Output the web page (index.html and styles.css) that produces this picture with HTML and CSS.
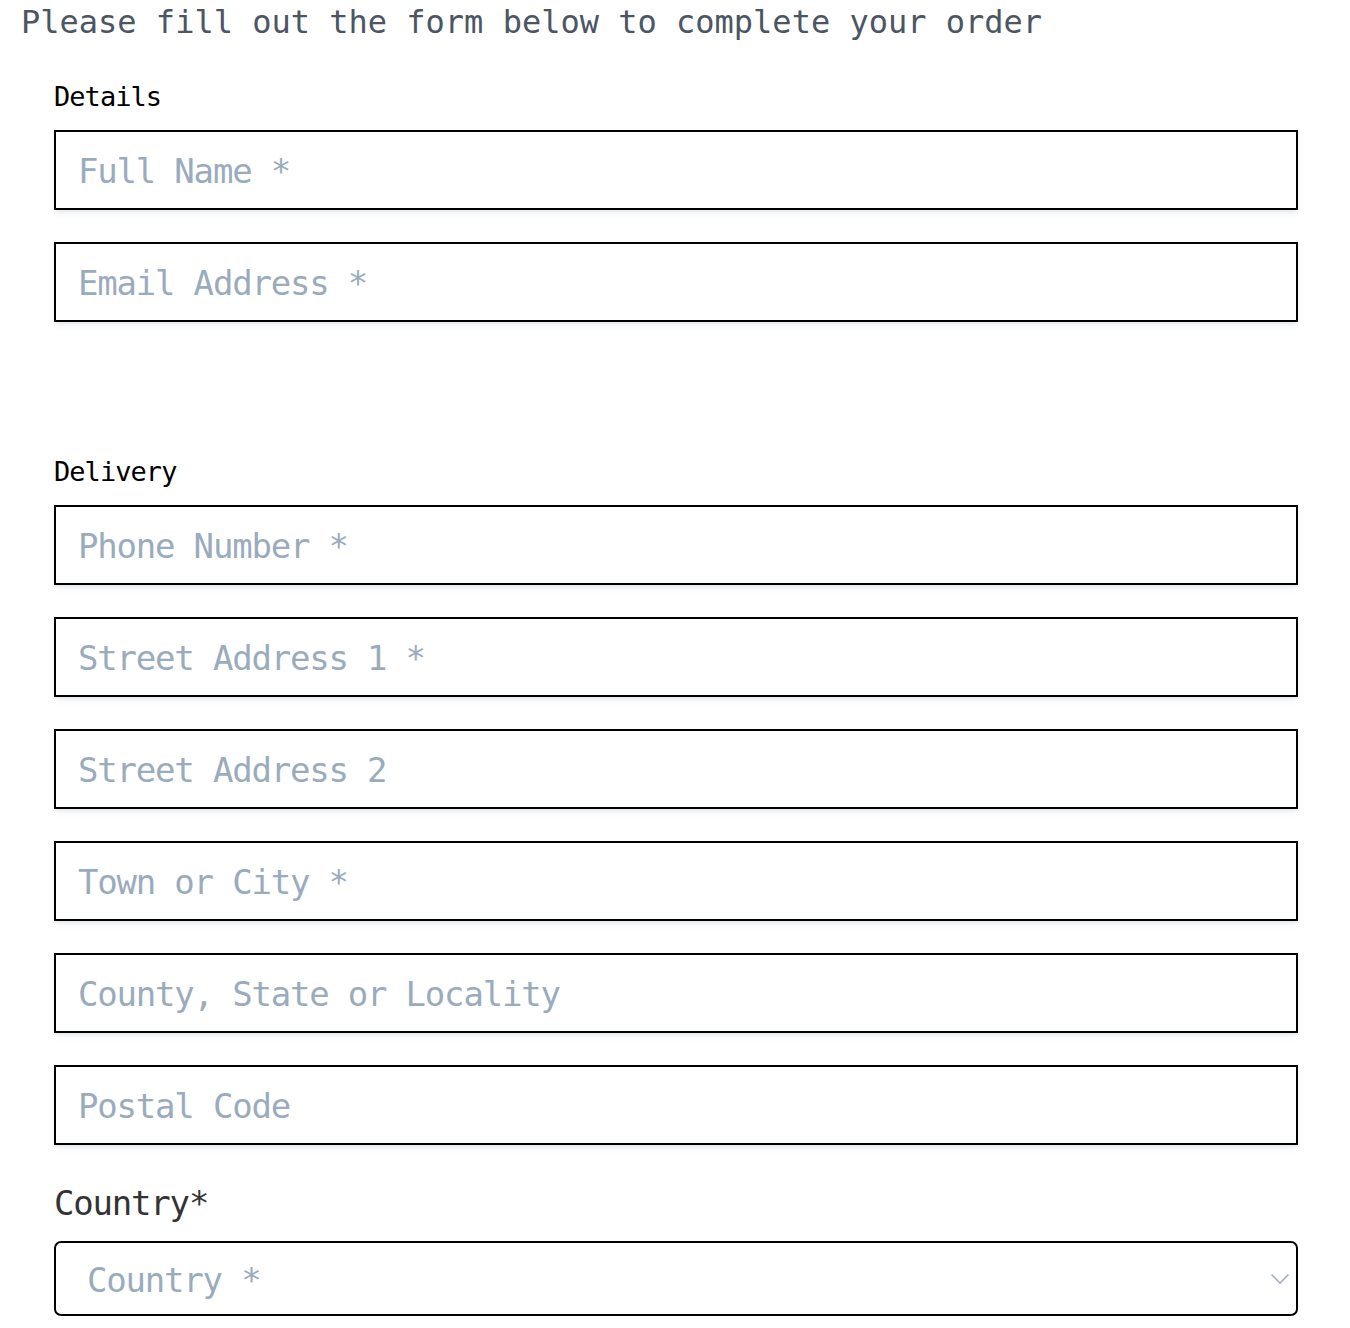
FILE: index.html
```html
<!DOCTYPE html>
<html lang="en">
<head>
<meta charset="utf-8">
<title>Order form</title>
<link rel="stylesheet" href="styles.css">
</head>
<body>
<h1 class="intro">Please fill out the form below to complete your order</h1>
<form class="order-form">
  <section class="group group-details">
    <h2 class="group-title">Details</h2>
    <input class="field" type="text" placeholder="Full Name *">
    <input class="field" type="email" placeholder="Email Address *">
  </section>
  <section class="group group-delivery">
    <h2 class="group-title">Delivery</h2>
    <input class="field" type="tel" placeholder="Phone Number *">
    <input class="field" type="text" placeholder="Street Address 1 *">
    <input class="field" type="text" placeholder="Street Address 2">
    <input class="field" type="text" placeholder="Town or City *">
    <input class="field" type="text" placeholder="County, State or Locality">
    <input class="field" type="text" placeholder="Postal Code">
    <label class="country-label" for="country">Country*</label>
    <div class="select-wrap">
      <select id="country" class="select">
        <option value="" selected disabled>Country *</option>
        <option>United Kingdom</option>
        <option>United States</option>
      </select>
      <svg class="chevron" width="20" height="12" viewBox="0 0 20 12" aria-hidden="true">
        <path d="M1.5 1.5 L10 10 L18.5 1.5" fill="none" stroke="#a3b1c2" stroke-width="1.6"/>
      </svg>
    </div>
  </section>
</form>
</body>
</html>
```
FILE: styles.css
```css
html, body {
  margin: 0;
  padding: 0;
  background: #ffffff;
}

body {
  font-family: "DejaVu Sans Mono", "Liberation Mono", monospace;
  width: 1350px;
}

.intro {
  margin: 2px 0 0 21px;
  font-size: 32px;
  line-height: 40px;
  font-weight: normal;
  color: #4b5563;
  white-space: nowrap;
}

.order-form {
  margin: 0 52px 0 54px;
  display: flex;
  flex-direction: column;
}

.group {
  display: flex;
  flex-direction: column;
  gap: 32px;
}

.group-details {
  margin-top: 39px;
}

.group-delivery {
  margin-top: 134px;
}

.group-title {
  margin: 0 0 -15px 0;
  font-size: 27px;
  letter-spacing: -0.95px;
  line-height: 32px;
  font-weight: normal;
  color: #000000;
}

.field {
  display: block;
  box-sizing: border-box;
  width: 100%;
  height: 80px;
  margin: 0;
  padding: 2px 22px 0;
  border: 2.5px solid #000000;
  border-radius: 0;
  background: #ffffff;
  font-family: inherit;
  font-size: 34px;
  letter-spacing: -1.2px;
  color: #111827;
  box-shadow: 0 4px 6px -1px rgba(100, 116, 139, 0.12), 0 2px 4px -1px rgba(100, 116, 139, 0.08);
  outline: none;
}

.field::placeholder {
  color: #9aabbd;
  opacity: 1;
}

.country-label {
  margin-top: 6px;
  margin-bottom: -14px;
  font-size: 34px;
  letter-spacing: -1.2px;
  line-height: 40px;
  color: #333333;
}

.select-wrap {
  position: relative;
  margin-bottom: 12px;
}

.select {
  display: block;
  box-sizing: border-box;
  width: 100%;
  height: 75px;
  margin: 0;
  padding: 2px 60px 0 31px;
  border: 2px solid #000000;
  border-radius: 7px;
  background: #ffffff;
  font-family: inherit;
  font-size: 34px;
  letter-spacing: -1.2px;
  color: #9aabbd;
  -webkit-appearance: none;
  appearance: none;
  outline: none;
}

.chevron {
  position: absolute;
  right: 8px;
  top: 32px;
  pointer-events: none;
}
```
